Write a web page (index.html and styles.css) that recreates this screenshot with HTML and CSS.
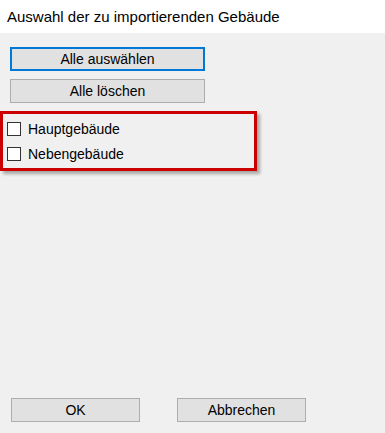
FILE: index.html
```html
<!DOCTYPE html>
<html lang="de">
<head>
    <meta charset="UTF-8">
    <meta name="viewport" content="width=device-width, initial-scale=1.0">
    <title>Auswahl</title>
    <link rel="stylesheet" href="styles.css">
</head>
<body>
    <section class="dialog">
        <div class="title-bar">Auswahl der zu importierenden Gebäude</div>
        <div class="content">
            <div class="select-buttons">
                <button class="btn wide focused">Alle auswählen</button>
                <button class="btn wide">Alle löschen</button>
            </div>
            <div class="building-list">
                <label class="row"><span class="box"></span>Hauptgebäude</label>
                <label class="row"><span class="box"></span>Nebengebäude</label>
            </div>
        </div>
        <div class="footer">
            <button class="btn small">OK</button>
            <button class="btn small">Abbrechen</button>
        </div>
    </section>
</body>
</html>
```

FILE: styles.css
```css
html, body {
    margin: 0;
    padding: 0;
}

body {
    font-family: "Liberation Sans", Arial, sans-serif;
    background-color: #f0f0f0;
    color: #000;
}

.dialog {
    width: 385px;
    height: 433px;
    display: flex;
    flex-direction: column;
}

.title-bar {
    height: 33px;
    box-sizing: border-box;
    padding: 8px 0 0 7px;
    background-color: #fff;
    font-size: 15px;
    line-height: 18px;
}

.content {
    flex: 1;
    padding-top: 14px;
}

.select-buttons {
    display: flex;
    flex-direction: column;
    gap: 8px;
    margin-left: 10px;
}

.btn {
    box-sizing: border-box;
    height: 24px;
    padding: 0;
    font-family: "Liberation Sans", Arial, sans-serif;
    font-size: 14px;
    color: #000;
    background-color: #e1e1e1;
    border: 1px solid #adadad;
}

.wide {
    width: 195px;
}

.focused {
    border: 2px solid #0078d7;
}

.building-list {
    box-sizing: border-box;
    width: 257px;
    height: 60px;
    margin-top: 8px;
    padding: 8px 0 0 4px;
    border: 3px solid #cc0000;
    box-shadow: 3px 3px 3px rgba(0, 0, 0, 0.3);
    display: flex;
    flex-direction: column;
    gap: 11px;
}

.row {
    display: flex;
    align-items: center;
    height: 14px;
    font-size: 14px;
}

.box {
    box-sizing: border-box;
    width: 14px;
    height: 14px;
    margin-right: 7px;
    background-color: #fff;
    border: 1px solid #333;
}

.footer {
    display: flex;
    gap: 37px;
    padding: 0 0 11px 11px;
}

.small {
    width: 129px;
}
```
